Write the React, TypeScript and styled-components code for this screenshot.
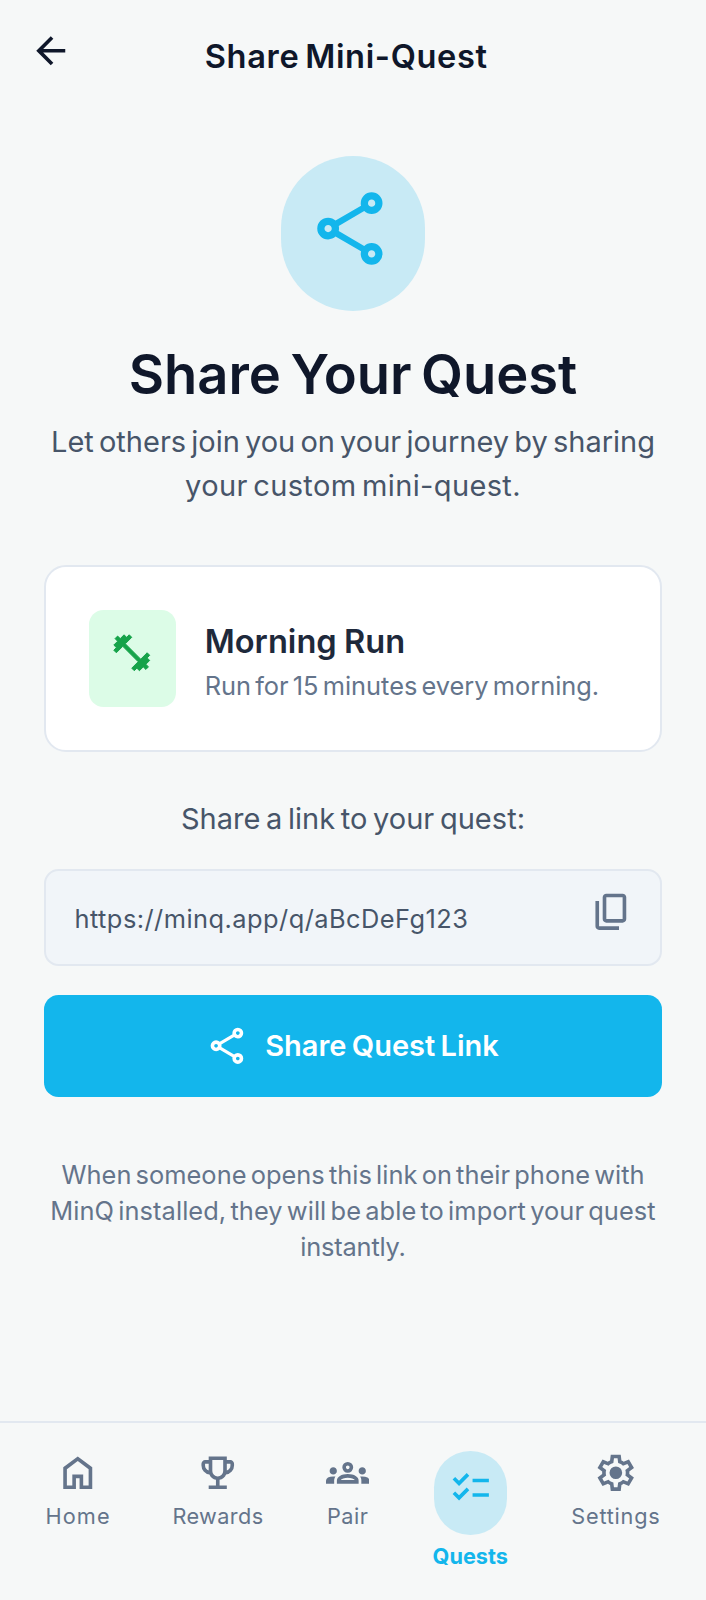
import React from "react";
import styled, { createGlobalStyle } from "styled-components";

const color = {
  page: "#f6f8f8",
  primary: "#13b6ec",
  tint: "#c8eaf5",
  ink: "#0f172a",
  heading: "#1e293b",
  body: "#475569",
  muted: "#64748b",
  line: "#e2e8f0",
};

const GlobalStyle = createGlobalStyle`
  *, *::before, *::after { box-sizing: border-box; }
  body {
    margin: 0;
    background: ${color.page};
    font-family: "Inter", "Liberation Sans", sans-serif;
    color: ${color.ink};
  }
  h1, h2, h3, p { margin: 0; }
  button { font-family: inherit; border: 0; background: none; padding: 0; color: inherit; }
`;

const icons = {
  back: "m313-440 224 224-57 56-320-320 320-320 57 56-224 224h487v80H313Z",
  share:
    "M680-80q-50 0-85-35t-35-85q0-6 3-28L282-392q-16 15-37 23.5t-45 8.5q-50 0-85-35t-35-85q0-50 35-85t85-35q24 0 45 8.5t37 23.5l281-164q-2-7-2.5-13.5T560-760q0-50 35-85t85-35q50 0 85 35t35 85q0 50-35 85t-85 35q-24 0-45-8.5T598-672L317-508q2 7 2.5 13.5t.5 14.5q0 8-.5 14.5T317-452l281 164q16-15 37-23.5t45-8.5q50 0 85 35t35 85q0 50-35 85t-85 35Zm0-80q17 0 28.5-11.5T720-200q0-17-11.5-28.5T680-240q-17 0-28.5 11.5T640-200q0 17 11.5 28.5T680-160ZM200-440q17 0 28.5-11.5T240-480q0-17-11.5-28.5T200-520q-17 0-28.5 11.5T160-480q0 17 11.5 28.5T200-440Zm480-280q17 0 28.5-11.5T720-760q0-17-11.5-28.5T680-800q-17 0-28.5 11.5T640-760q0 17 11.5 28.5T680-720Z",
  dumbbell:
    "m536-84-56-56 142-142-340-340-142 142-56-56 56-58-56-56 84-84-56-58 56-56 58 56 84-84 56 56 58-56 56 56-142 142 340 340 142-142 56 56-56 58 56 56-84 84 56 58-56 56-58-56-84 84-56-56-58 56Z",
  copy: "M360-240q-33 0-56.5-23.5T280-320v-480q0-33 23.5-56.5T360-880h360q33 0 56.5 23.5T800-800v480q0 33-23.5 56.5T720-240H360Zm0-80h360v-480H360v480ZM200-80q-33 0-56.5-23.5T120-160v-560h80v560h440v80H200Z",
  home: "M240-200h120v-240h240v240h120v-360L480-740 240-560v360Zm-80 80v-480l320-240 320 240v480H520v-240h-80v240H160Z",
  trophy:
    "M280-120v-80h160v-124q-49-11-87.5-41.5T296-442q-75-9-125.5-65.5T120-640v-40q0-33 23.5-56.5T200-760h80v-80h400v80h80q33 0 56.5 23.5T840-680v40q0 76-50.5 132.5T664-442q-18 46-56.5 76.5T520-324v124h160v80H280Zm0-408v-152h-80v40q0 38 22 68.5t58 43.5Zm200 128q50 0 85-35t35-85v-240H360v240q0 50 35 85t85 35Zm200-128q36-13 58-43.5t22-68.5v-40h-80v152Z",
  groups:
    "M0-240v-63q0-43 44-70t116-27q13 0 25 .5t23 2.5q-14 21-21 44t-7 48v65H0Zm240 0v-65q0-32 17.5-58.5T307-410q32-20 76.5-30t96.5-10q53 0 97.5 10t76.5 30q32 20 49 46.5t17 58.5v65H240Zm540 0v-65q0-26-6.5-49T754-397q11-2 22.5-2.5t23.5-.5q72 0 116 26.5t44 70.5v63H780Zm-455-80h311q-10-20-55.5-35T480-370q-55 0-100.5 15T325-320ZM160-440q-33 0-56.5-23.5T80-520q0-34 23.5-57t56.5-23q34 0 57 23t23 57q0 33-23 56.5T160-440Zm640 0q-33 0-56.5-23.5T720-520q0-34 23.5-57t56.5-23q34 0 57 23t23 57q0 33-23 56.5T800-440Zm-320-40q-50 0-85-35t-35-85q0-51 35-85.5t85-34.5q51 0 85.5 34.5T600-600q0 50-34.5 85T480-480Zm0-80q17 0 28.5-11.5T520-600q0-17-11.5-28.5T480-640q-17 0-28.5 11.5T440-600q0 17 11.5 28.5T480-560Z",
  checklist:
    "M222-200 80-342l56-56 85 85 170-170 56 57-225 226Zm0-320L80-662l56-56 85 85 170-170 56 57-225 226Zm298 240v-80h360v80H520Zm0-320v-80h360v80H520Z",
  settings:
    "m370-80-16-128q-13-5-24.5-12T307-235l-119 50L78-375l103-78q-1-7-1-13.5v-27q0-6.5 1-13.5L78-585l110-190 119 50q11-8 23-15t24-12l16-128h220l16 128q13 5 24.5 12t22.5 15l119-50 110 190-103 78q1 7 1 13.5v27q0 6.5-2 13.5l103 78-110 190-118-50q-11 8-23 15t-24 12L590-80H370Zm70-80h79l14-106q31-8 57.5-23.5T639-327l99 41 39-68-86-65q5-14 7-29.5t2-31.5q0-16-2-31.5t-7-29.5l86-65-39-68-99 42q-22-23-48.5-38.5T533-694l-13-106h-79l-14 106q-31 8-57.5 23.5T321-633l-99-41-39 68 86 64q-5 15-7 30t-2 32q0 16 2 31t7 30l-86 65 39 68 99-42q22 23 48.5 38.5T427-266l13 106Zm42-180q58 0 99-41t41-99q0-58-41-99t-99-41q-59 0-99.5 41T342-480q0 58 40.5 99t99.5 41Z",
};

type IconName = keyof typeof icons;

const Glyph = styled.svg<{ $size: number; $heavy?: boolean }>`
  display: block;
  flex: none;
  width: ${(p) => p.$size}px;
  height: ${(p) => p.$size}px;
  fill: currentColor;
  stroke: ${(p) => (p.$heavy ? "currentColor" : "none")};
  stroke-width: 22;
`;

function Icon({ name, size = 43.5, heavy }: { name: IconName; size?: number; heavy?: boolean }) {
  return (
    <Glyph $size={size} $heavy={heavy} viewBox="0 -960 960 960" aria-hidden="true">
      <path d={icons[name]} />
    </Glyph>
  );
}

const Screen = styled.div`
  width: 100%;
  height: 1600px;
  display: flex;
  flex-direction: column;
  background: ${color.page};
`;

const Header = styled.header`
  display: flex;
  align-items: flex-start;
  padding: 29px 29px 0;
  height: 112px;
`;

const HeaderTitle = styled.h1`
  flex: 1;
  margin-right: 57px;
  padding-top: 2.4px;
  text-align: center;
  font-size: 32.6px;
  line-height: 50.7px;
  font-weight: 600;
  letter-spacing: 0.65px;
  word-spacing: -3px;
`;

const Main = styled.main`
  flex: 1;
  display: flex;
  flex-direction: column;
  padding: 43.5px 43.7px 0;
`;

const HeroBadge = styled.div`
  align-self: center;
  width: 144.7px;
  height: 155.5px;
  padding: 29px;
  border-radius: 72.5px;
  background: ${color.tint};
  color: ${color.primary};
`;

const HeroTitle = styled.h2`
  margin-top: 30.8px;
  text-align: center;
  font-size: 54.3px;
  line-height: 65px;
  font-weight: 600;
  letter-spacing: -0.05px;
  word-spacing: -4px;
`;

const Line = styled.span<{ $track?: number }>`
  display: block;
  white-space: nowrap;
  letter-spacing: ${(p) => p.$track ?? 0}px;
`;

const Lead = styled.p`
  margin-top: 13.6px;
  text-align: center;
  font-size: 29px;
  line-height: 43.5px;
  font-weight: 400;
  word-spacing: -3px;
  color: ${color.body};
`;

const QuestCard = styled.section`
  display: flex;
  align-items: center;
  gap: 29px;
  margin-top: 57.6px;
  height: 187.5px;
  padding: 0 43px;
  border: 2px solid ${color.line};
  border-radius: 22px;
  background: #fff;
`;

const QuestIcon = styled.div`
  width: 87px;
  height: 97.5px;
  padding: 21px;
  border-radius: 14.5px;
  background: #dcfce7;
  color: #16a34a;
`;

const QuestText = styled.div`
  padding-top: 2px;
`;

const QuestName = styled.h3`
  font-size: 32.6px;
  line-height: 51px;
  font-weight: 600;
  letter-spacing: 0.02px;
  word-spacing: -1px;
  color: ${color.heading};
`;

const QuestDetail = styled.p`
  padding-top: 1.2px;
  font-size: 25.4px;
  line-height: 36.2px;
  font-weight: 400;
  word-spacing: -3px;
  color: ${color.muted};
`;

const LinkLabel = styled.p`
  margin-top: 45px;
  text-align: center;
  font-size: 29px;
  line-height: 43.5px;
  font-weight: 400;
  letter-spacing: 0.03px;
  word-spacing: -2.6px;
  color: ${color.body};
`;

const LinkField = styled.div`
  display: flex;
  justify-content: space-between;
  margin-top: 27.8px;
  height: 97px;
  padding: 0 27.2px 0 28.8px;
  border: 2px solid ${color.line};
  border-radius: 14.5px;
  background: #f1f5f9;
`;

const LinkText = styled.span`
  align-self: center;
  padding-top: 3px;
  font-size: 25.4px;
  line-height: 36px;
  font-weight: 400;
  letter-spacing: 0.46px;
  color: ${color.body};
`;

const CopyButton = styled.button`
  align-self: flex-start;
  margin-top: 19.4px;
  color: ${color.muted};
`;

const ShareButton = styled.button`
  display: flex;
  align-items: center;
  justify-content: center;
  gap: 14.5px;
  margin-top: 29.7px;
  height: 101.2px;
  border-radius: 14.5px;
  background: ${color.primary};
  color: #fff;
  font-size: 29px;
  line-height: 43.5px;
  font-weight: 600;
  word-spacing: -2px;
`;

const Note = styled.p`
  margin-top: 60.2px;
  text-align: center;
  font-size: 25.4px;
  line-height: 36.2px;
  font-weight: 400;
  word-spacing: -3px;
  color: ${color.muted};
`;

const TabBar = styled.nav`
  flex: none;
  display: flex;
  justify-content: space-between;
  align-items: flex-start;
  height: 179px;
  padding: 28.2px 46.5px 0 45.5px;
  border-top: 2px solid ${color.line};
`;

const Tab = styled.a<{ $width: number; $active?: boolean }>`
  display: flex;
  flex-direction: column;
  align-items: center;
  gap: 7.2px;
  width: ${(p) => p.$width}px;
  color: ${(p) => (p.$active ? color.primary : color.muted)};
  font-weight: ${(p) => (p.$active ? 700 : 400)};
`;

const TabPill = styled.span`
  width: 72.5px;
  height: 83.5px;
  padding: 14.5px;
  border-radius: 36.25px;
  background: ${color.tint};
`;

const TabLabel = styled.span<{ $track: number }>`
  font-size: 21.7px;
  line-height: 29px;
  letter-spacing: ${(p) => p.$track}px;
  margin-right: -${(p) => Math.max(p.$track, 0)}px;
`;

const tabs: { label: string; icon: IconName; width: number; track: number; active?: boolean }[] = [
  { label: "Home", icon: "home", width: 64, track: 1.1 },
  { label: "Rewards", icon: "trophy", width: 89, track: 0.4 },
  { label: "Pair", icon: "groups", width: 43, track: 0.5 },
  { label: "Quests", icon: "checklist", width: 75, track: 0, active: true },
  { label: "Settings", icon: "settings", width: 88, track: 0.75 },
];

export default function App() {
  return (
    <>
      <GlobalStyle />
      <Screen>
        <Header>
          <button aria-label="Back">
            <Icon name="back" />
          </button>
          <HeaderTitle>Share Mini-Quest</HeaderTitle>
        </Header>
        <Main>
          <HeroBadge>
            <Icon name="share" size={87} />
          </HeroBadge>
          <HeroTitle>Share Your Quest</HeroTitle>
          <Lead>
            <Line>Let others join you on your journey by sharing</Line>
            <Line $track={0.37}>your custom mini-quest.</Line>
          </Lead>
          <QuestCard>
            <QuestIcon>
              <Icon name="dumbbell" heavy />
            </QuestIcon>
            <QuestText>
              <QuestName>Morning Run</QuestName>
              <QuestDetail>Run for 15 minutes every morning.</QuestDetail>
            </QuestText>
          </QuestCard>
          <LinkLabel>Share a link to your quest:</LinkLabel>
          <LinkField>
            <LinkText>https://minq.app/q/aBcDeFg123</LinkText>
            <CopyButton aria-label="Copy link">
              <Icon name="copy" />
            </CopyButton>
          </LinkField>
          <ShareButton>
            <Icon name="share" />
            <span>Share Quest Link</span>
          </ShareButton>
          <Note>
            <Line $track={0.03}>When someone opens this link on their phone with</Line>
            <Line $track={0.07}>MinQ installed, they will be able to import your quest</Line>
            <Line $track={-0.2}>instantly.</Line>
          </Note>
        </Main>
        <TabBar>
          {tabs.map((tab) => (
            <Tab key={tab.label} $width={tab.width} $active={tab.active}>
              {tab.active ? (
                <TabPill>
                  <Icon name={tab.icon} />
                </TabPill>
              ) : (
                <Icon name={tab.icon} />
              )}
              <TabLabel $track={tab.track}>{tab.label}</TabLabel>
            </Tab>
          ))}
        </TabBar>
      </Screen>
    </>
  );
}
